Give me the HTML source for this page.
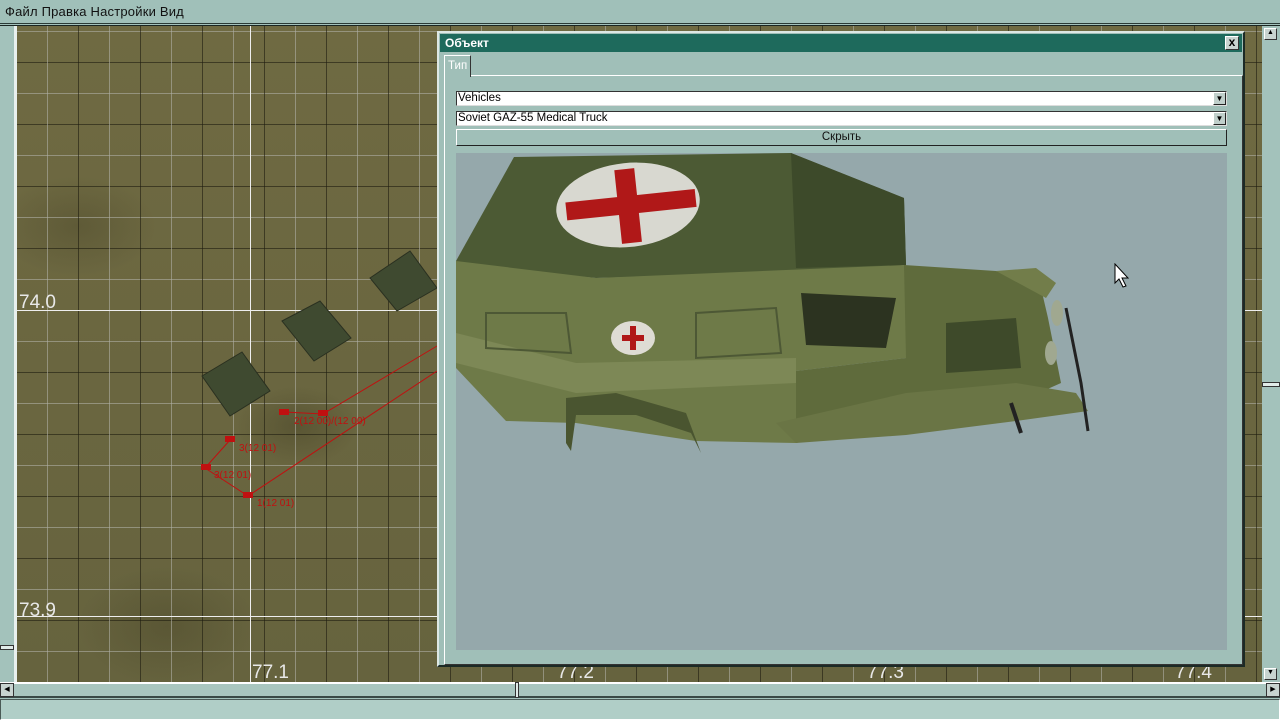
<!DOCTYPE html>
<html><head><meta charset="utf-8"><style>
*{margin:0;padding:0;box-sizing:border-box}
body{width:1280px;height:720px;overflow:hidden;background:#a3c2bb;font-family:"Liberation Sans","DejaVu Sans",sans-serif;position:relative}
.abs{position:absolute}
#menu{left:0;top:0;width:1280px;height:24px;background:#a0c0b9;border-bottom:1px solid #2a3a36;font-size:13px;color:#111;padding:4px 0 0 5px;letter-spacing:0.2px}
#map{left:17px;top:26px;width:1245px;height:656px;background:
 radial-gradient(ellipse 60px 40px at 280px 400px,rgba(40,35,15,.25),transparent),
 radial-gradient(ellipse 90px 60px at 150px 600px,rgba(40,35,15,.2),transparent),
 radial-gradient(ellipse 80px 50px at 60px 200px,rgba(40,35,15,.2),transparent),
 linear-gradient(#6f6a42,#66633e);overflow:hidden}
#grid{left:0;top:0;width:100%;height:100%;background:
 repeating-linear-gradient(90deg,transparent 0 30px,rgba(175,175,165,.6) 30px 31px,transparent 31px 61px,rgba(30,28,15,.6) 61px 62px),
 repeating-linear-gradient(0deg,transparent 0 30px,rgba(175,175,165,.6) 30px 31px,transparent 31px 61px,rgba(30,28,15,.6) 61px 62px)}
.lbl{color:#e8e8e8;font-size:19px}
#dlg{left:437px;top:31px;width:808px;height:636px;background:#a0bfb8;border:2px solid #dde8e4;border-right-color:#1c2a26;border-bottom-color:#1c2a26}
#title{left:1px;top:1px;width:802px;height:18px;background:#1e6a5c;color:#fff;font-size:12px;font-weight:bold;padding:2px 0 0 5px}
.close{right:3px;top:2px;width:14px;height:14px;background:#c8d4d0;border:1px solid #fff;border-right-color:#333;border-bottom-color:#333;font-size:12px;line-height:11px;text-align:center;font-weight:bold;color:#000}
.combo{left:17px;width:771px;height:15px;background:#fff;border:1px solid #333;border-right-color:#ddd;border-bottom-color:#ddd;font-size:11.5px;line-height:13px;padding-left:1px;color:#000}
.arrow{right:0;top:0;width:13px;height:13px;background:#c0cfcb;border:1px solid #fff;border-right-color:#222;border-bottom-color:#222;font-size:8px;text-align:center;line-height:12px}
</style></head><body>
<div id="menu" class="abs">Файл Правка Настройки Вид</div>
<div class="abs" style="left:0;top:25px;width:1280px;height:1px;background:#1a2623"></div>
<div class="abs" style="left:14px;top:26px;width:3px;height:656px;background:#e8f0ee"></div>
<div id="map" class="abs">
 <div id="grid" class="abs"></div>
 <div class="abs" style="left:233px;top:0;width:1px;height:100%;background:#eee"></div>
 <div class="abs" style="left:0;top:284px;width:100%;height:1px;background:#eee"></div>
 <div class="abs" style="left:0;top:590px;width:100%;height:1px;background:#eee"></div>
 <div class="abs lbl" style="left:2px;top:266px">74.0</div>
 <div class="abs lbl" style="left:2px;top:574px">73.9</div>
 <div class="abs lbl" style="left:235px;top:636px">77.1</div>
 <div class="abs lbl" style="left:540px;top:636px">77.2</div>
 <div class="abs lbl" style="left:850px;top:636px">77.3</div>
 <div class="abs lbl" style="left:1158px;top:636px">77.4</div>
 <svg class="abs" style="left:0;top:0" width="440" height="656">
  <g fill="#3f4a30" stroke="#2a3020"><polygon points="185,350 225,326 253,365 213,390"/><polygon points="265,295 303,275 334,312 297,335"/><polygon points="353,252 393,225 420,262 380,285"/></g>
  <g stroke="#c01010" stroke-width="1" fill="none"><polyline points="188,442 213,414"/><polyline points="188,442 231,470 420,345"/><polyline points="267,386 306,388 420,320"/></g>
  <g fill="#c01010"><rect x="208" y="410" width="10" height="6"/><rect x="184" y="438" width="10" height="6"/><rect x="226" y="466" width="10" height="6"/><rect x="262" y="383" width="10" height="6"/><rect x="301" y="384" width="10" height="6"/></g>
  <g fill="#c01010" font-size="10" font-family="Liberation Sans"><text x="222" y="425">3(12 01)</text><text x="197" y="452">3(12 01)</text><text x="240" y="480">1(12 01)</text><text x="277" y="398">2(12 00)/(12 00)</text></g>
 </svg>
</div>
<div class="abs" style="left:1262px;top:26px;width:18px;height:656px;background:#a3c2bb"></div>
<div class="abs" style="left:1264px;top:28px;width:13px;height:12px;background:#c8d4d0;border:1px solid #fff;border-right-color:#333;border-bottom-color:#333;font-size:7px;text-align:center">▲</div>
<div class="abs" style="left:1264px;top:668px;width:13px;height:12px;background:#c8d4d0;border:1px solid #fff;border-right-color:#333;border-bottom-color:#333;font-size:7px;text-align:center">▼</div>
<div class="abs" style="left:1262px;top:382px;width:18px;height:5px;background:#e0ebe8;border:1px solid #333"></div>
<div class="abs" style="left:0;top:645px;width:14px;height:5px;background:#e0ebe8;border:1px solid #333"></div>
<div class="abs" style="left:0;top:682px;width:1280px;height:16px;background:#a9c6bf;border-top:2px solid #fff;border-bottom:2px solid #3a4a46"></div>
<div class="abs" style="left:0;top:683px;width:14px;height:14px;background:#c8d4d0;border:1px solid #333;font-size:7px;text-align:center;line-height:12px">◀</div>
<div class="abs" style="left:1266px;top:683px;width:14px;height:14px;background:#c8d4d0;border:1px solid #333;font-size:7px;text-align:center;line-height:12px">▶</div>
<div class="abs" style="left:515px;top:682px;width:4px;height:16px;background:#e0ebe8;border:1px solid #333"></div>
<div class="abs" style="left:0;top:699px;width:1280px;height:21px;background:#b0cec7;border:1px solid #4a5a56;border-right-color:#fff;border-bottom-color:#fff"></div>

<div id="dlg" class="abs">
 <div id="title" class="abs">Объект<div class="abs close">x</div></div>
 <div class="abs" style="left:5px;top:22px;width:27px;height:22px;border:1px solid #fff;border-bottom:none;border-right-color:#333;color:#fff;font-size:11.5px;padding:4px 0 0 3px;background:#a0bfb8;z-index:2">Тип</div>
 <div class="abs" style="left:5px;top:42px;width:799px;height:590px;border:1px solid #fff;border-right-color:#333;border-bottom-color:#333"></div>
 <div class="abs combo" style="top:58px">Vehicles<div class="abs arrow">▼</div></div>
 <div class="abs combo" style="top:78px">Soviet GAZ-55 Medical Truck<div class="abs arrow">▼</div></div>
 <div class="abs" style="left:17px;top:96px;width:771px;height:17px;background:#a0bfb8;border:1px solid #fff;border-right-color:#222;border-bottom-color:#222;font-size:11.5px;text-align:center;line-height:14px;color:#111">Скрыть</div>
 <div class="abs" style="left:17px;top:120px;width:771px;height:497px;background:#95a8ab;overflow:hidden">
  <svg width="771" height="497">
   <polygon points="0,108 58,4 335,0 448,45 450,112 380,118 140,125 0,112" fill="#4c5a34"/>
   <polygon points="335,0 448,45 450,112 340,115" fill="#3d4a2a"/>
   <polygon points="0,108 140,125 450,112 450,205 340,218 340,290 240,288 120,270 50,268 0,215" fill="#6e7a48"/>
   <polygon points="0,180 120,210 340,205 340,230 120,240 0,210" fill="#7d8856"/>
   <polygon points="448,112 540,118 585,135 592,165 605,230 560,250 450,265 340,290 340,218 450,205" fill="#5f6b3c"/>
   <polygon points="540,118 580,115 600,130 590,145" fill="#727d4a"/>
   <polygon points="450,240 560,230 620,240 632,258 560,268 450,282 340,290 320,270" fill="#6a7545"/>
   <polygon points="110,245 160,240 230,260 245,300 235,280 180,262 120,262 115,298 110,290" fill="#4a5530"/>
   <polygon points="345,140 440,145 430,195 350,192" fill="#2c3320"/>
   <polygon points="490,170 560,165 565,215 490,220" fill="#3e4a2a"/>
   <ellipse cx="601" cy="160" rx="6" ry="13" fill="#a0a890"/>
   <ellipse cx="595" cy="200" rx="6" ry="12" fill="#a0a890"/>
   <polyline points="610,155 625,230 632,278" stroke="#222" stroke-width="3" fill="none"/>
   <polyline points="555,250 565,280" stroke="#222" stroke-width="4" fill="none"/>
   <ellipse cx="172" cy="52" rx="72" ry="42" fill="#d8d8d0" transform="rotate(-6 172 52)"/>
   <rect x="110" y="43" width="130" height="18" fill="#b01818" transform="rotate(-6 172 52)"/>
   <rect x="162" y="16" width="20" height="74" fill="#b01818" transform="rotate(-6 172 52)"/>
   <ellipse cx="177" cy="185" rx="22" ry="17" fill="#dedcd4"/>
   <rect x="166" y="182" width="22" height="6" fill="#b01818"/>
   <rect x="174" y="173" width="6" height="24" fill="#b01818"/>
   <polygon points="30,160 110,160 115,200 30,195" fill="none" stroke="#4d5835" stroke-width="2"/>
   <polygon points="240,160 320,155 325,200 240,205" fill="none" stroke="#4d5835" stroke-width="2"/>
  </svg>
  <svg class="abs" style="left:658px;top:110px" width="16" height="26"><polygon points="1,1 1,20 5,16 9,24 12,23 8,15 14,15" fill="#fff" stroke="#000"/></svg>
 </div>
</div>
</body></html>
